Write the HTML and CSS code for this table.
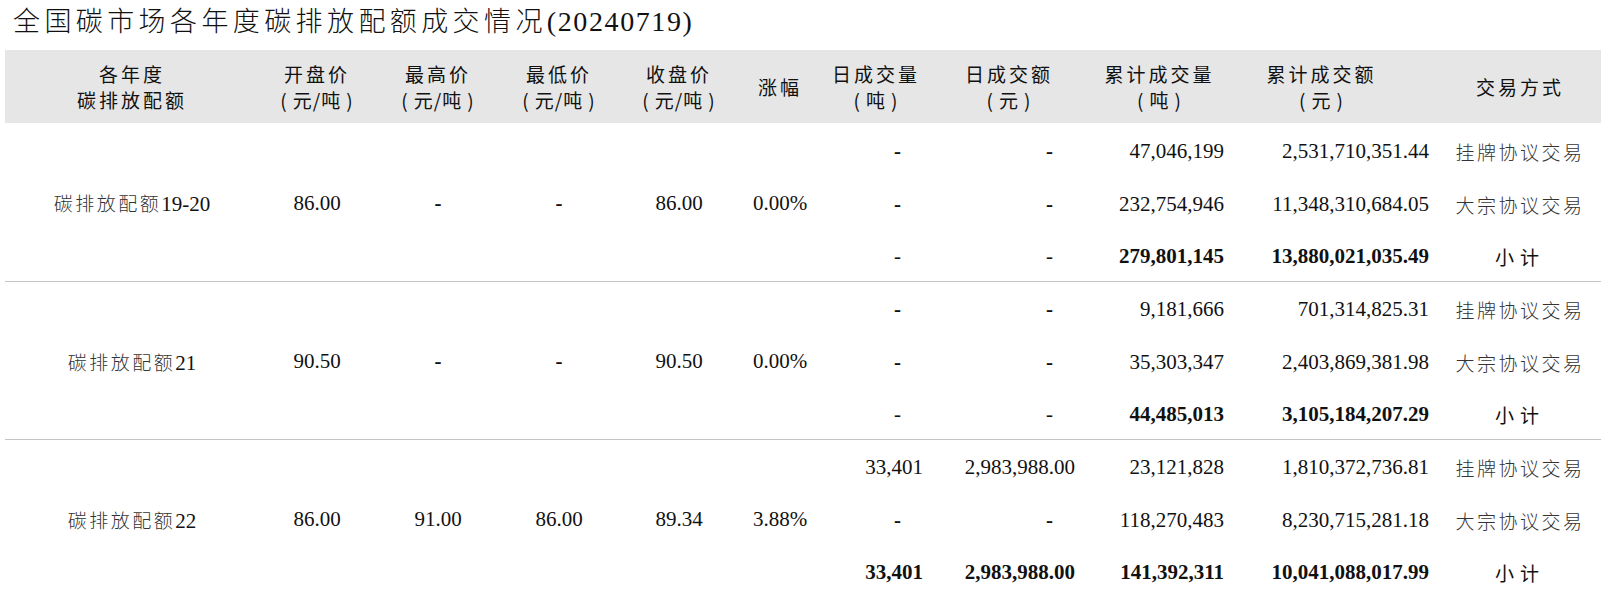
FILE: index.html
```html
<!DOCTYPE html>
<html lang="zh-CN">
<head>
<meta charset="utf-8">
<title>全国碳市场各年度碳排放配额成交情况</title>
<link rel="stylesheet" href="styles.css">
</head>
<body>
<h1 class="title"><span class="title-cn">全国碳市场各年度碳排放配额成交情况</span><span class="title-num">(20240719)</span></h1>
<table class="grid">
  <colgroup>
    <col class="c1"><col class="c2"><col class="c3"><col class="c4"><col class="c5"><col class="c6">
    <col class="c7"><col class="c8"><col class="c9"><col class="c10"><col class="c11">
  </colgroup>
  <thead>
    <tr>
      <th>各年度<br>碳排放配额</th>
      <th>开盘价<br><span class="unit">(<i>元/吨</i>)</span></th>
      <th>最高价<br><span class="unit">(<i>元/吨</i>)</span></th>
      <th>最低价<br><span class="unit">(<i>元/吨</i>)</span></th>
      <th>收盘价<br><span class="unit">(<i>元/吨</i>)</span></th>
      <th class="narrow">涨幅</th>
      <th>日成交量<br><span class="unit">(<i>吨</i>)</span></th>
      <th>日成交额<br><span class="unit">(<i>元</i>)</span></th>
      <th>累计成交量<br><span class="unit">(<i>吨</i>)</span></th>
      <th class="shift">累计成交额<br><span class="unit">(<i>元</i>)</span></th>
      <th>交易方式</th>
    </tr>
  </thead>
  <tbody>
    <tr class="r1">
      <td rowspan="3" class="name end">碳排放配额<span class="num">19-20</span></td>
      <td rowspan="3" class="mid end">86.00</td>
      <td rowspan="3" class="mid end"><span class="dash">-</span></td>
      <td rowspan="3" class="mid end"><span class="dash">-</span></td>
      <td rowspan="3" class="mid end">86.00</td>
      <td rowspan="3" class="mid end">0.00%</td>
      <td class="nil"><span class="dash">-</span></td>
      <td class="nil"><span class="dash">-</span></td>
      <td class="amt">47,046,199</td>
      <td class="amt">2,531,710,351.44</td>
      <td class="way">挂牌协议交易</td>
    </tr>
    <tr class="r2">
      <td class="nil"><span class="dash">-</span></td>
      <td class="nil"><span class="dash">-</span></td>
      <td class="amt">232,754,946</td>
      <td class="amt">11,348,310,684.05</td>
      <td class="way">大宗协议交易</td>
    </tr>
    <tr class="r3 end">
      <td class="nil">-</td>
      <td class="nil">-</td>
      <td class="amt bold">279,801,145</td>
      <td class="amt bold">13,880,021,035.49</td>
      <td class="sum">小计</td>
    </tr>

    <tr class="r1">
      <td rowspan="3" class="name end">碳排放配额<span class="num">21</span></td>
      <td rowspan="3" class="mid end">90.50</td>
      <td rowspan="3" class="mid end"><span class="dash">-</span></td>
      <td rowspan="3" class="mid end"><span class="dash">-</span></td>
      <td rowspan="3" class="mid end">90.50</td>
      <td rowspan="3" class="mid end">0.00%</td>
      <td class="nil"><span class="dash">-</span></td>
      <td class="nil"><span class="dash">-</span></td>
      <td class="amt">9,181,666</td>
      <td class="amt">701,314,825.31</td>
      <td class="way">挂牌协议交易</td>
    </tr>
    <tr class="r2">
      <td class="nil"><span class="dash">-</span></td>
      <td class="nil"><span class="dash">-</span></td>
      <td class="amt">35,303,347</td>
      <td class="amt">2,403,869,381.98</td>
      <td class="way">大宗协议交易</td>
    </tr>
    <tr class="r3 end">
      <td class="nil">-</td>
      <td class="nil">-</td>
      <td class="amt bold">44,485,013</td>
      <td class="amt bold">3,105,184,207.29</td>
      <td class="sum">小计</td>
    </tr>

    <tr class="r1">
      <td rowspan="3" class="name">碳排放配额<span class="num">22</span></td>
      <td rowspan="3" class="mid">86.00</td>
      <td rowspan="3" class="mid">91.00</td>
      <td rowspan="3" class="mid">86.00</td>
      <td rowspan="3" class="mid">89.34</td>
      <td rowspan="3" class="mid">3.88%</td>
      <td class="amt">33,401</td>
      <td class="amt">2,983,988.00</td>
      <td class="amt">23,121,828</td>
      <td class="amt">1,810,372,736.81</td>
      <td class="way">挂牌协议交易</td>
    </tr>
    <tr class="r2">
      <td class="nil"><span class="dash">-</span></td>
      <td class="nil"><span class="dash">-</span></td>
      <td class="amt">118,270,483</td>
      <td class="amt">8,230,715,281.18</td>
      <td class="way">大宗协议交易</td>
    </tr>
    <tr class="r3">
      <td class="amt bold">33,401</td>
      <td class="amt bold">2,983,988.00</td>
      <td class="amt bold">141,392,311</td>
      <td class="amt bold">10,041,088,017.99</td>
      <td class="sum">小计</td>
    </tr>
  </tbody>
</table>
</body>
</html>
```

FILE: styles.css
```css
html, body {
  margin: 0;
  padding: 0;
  background: #ffffff;
}
body {
  padding: 0 5px;
  font-family: "Liberation Serif", "Noto Sans CJK SC", serif;
  color: #111;
}
.title {
  margin: 0;
  height: 50px;
  line-height: 40px;
  font-weight: normal;
  font-size: 27px;
  color: #111;
  padding-left: 8px;
  white-space: nowrap;
}
.title-cn {
  font-family: "Noto Sans CJK SC", sans-serif;
  font-weight: 300;
  letter-spacing: 4.4px;
}
.title-num {
  font-family: "Liberation Serif", serif;
  font-size: 28px;
  letter-spacing: 1.6px;
}
.grid {
  width: 1596px;
  border-collapse: collapse;
  table-layout: fixed;
}
.c1 { width: 254px; }
.c2 { width: 116px; }
.c3 { width: 126px; }
.c4 { width: 116px; }
.c5 { width: 124px; }
.c6 { width: 78px; }
.c7 { width: 114px; }
.c8 { width: 152px; }
.c9 { width: 149px; }
.c10 { width: 205px; }
.c11 { width: 162px; }

thead th {
  background: #e6e6e6;
  height: 73px;
  padding: 0;
  font-family: "Noto Sans CJK SC", sans-serif;
  font-weight: 400;
  font-size: 19px;
  line-height: 26px;
  letter-spacing: 3px;
  color: #111;
  text-align: center;
  vertical-align: middle;
}
thead th .unit {
  letter-spacing: 1px;
}
thead th .unit i {
  font-style: normal;
  padding: 0 5px;
}
thead th.shift {
  padding-right: 30px;
}
tbody td {
  padding: 3px 0 0 0;
  font-size: 21px;
  color: #111;
  vertical-align: middle;
  white-space: nowrap;
  box-sizing: border-box;
}
tbody tr.r1 td { height: 53px; }
tbody tr.r2 td { height: 53px; }
tbody tr.r3 td { height: 52px; }
tbody tr.end td,
tbody td.end {
  border-bottom: 1px solid #c4c4c4;
}
td.name {
  text-align: center;
  font-family: "Noto Sans CJK SC", sans-serif;
  font-weight: 300;
  font-size: 19px;
  letter-spacing: 2.5px;
  color: #333;
}
td.name .num {
  font-family: "Liberation Serif", serif;
  font-size: 21px;
  letter-spacing: 0;
  color: #111;
}
td.mid {
  text-align: center;
}
td.amt {
  text-align: right;
  padding-right: 10px;
}
td.nil {
  text-align: right;
  padding-right: 32px;
}
td.bold {
  font-weight: bold;
}
.dash {
  font-weight: bold;
}
td.way,
td.sum {
  text-align: center;
  font-family: "Noto Sans CJK SC", sans-serif;
  font-weight: 300;
  font-size: 19px;
  letter-spacing: 2.5px;
  color: #333;
}
td.sum {
  font-weight: 400;
  color: #111;
  letter-spacing: 6px;
}
```
